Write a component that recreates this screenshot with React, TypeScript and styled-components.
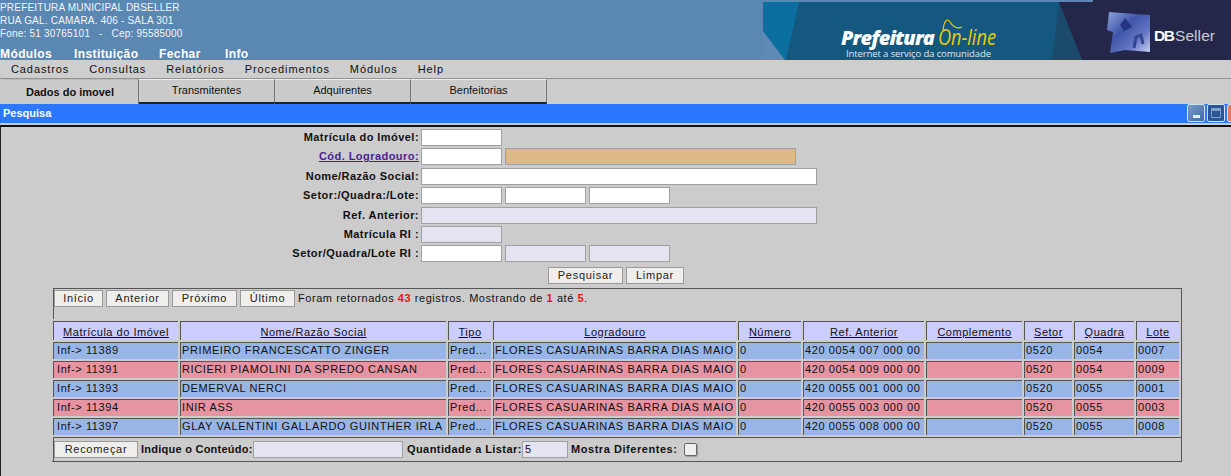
import React from "react";
import styled, { createGlobalStyle } from "styled-components";

const Global = createGlobalStyle`
  html, body { margin: 0; padding: 0; background: #cccccc; overflow: hidden; }
  body { font-family: "Liberation Sans", Arial, sans-serif; color: #000; }
  * { box-sizing: border-box; }
`;
const Page = styled.div`width: 1231px; height: 476px; overflow: hidden; background: #ccc; display: flex; flex-direction: column;`;
const Header = styled.header`height: 60px; display: flex; justify-content: space-between; background: #5b87b3; color: #fff;`;
const HeaderLeft = styled.div`display: flex; flex-direction: column; padding-top: 1px;`;
const Address = styled.div`font-size: 10px; line-height: 13px; height: 13px; letter-spacing: 0.2px; color: #f2f6fa; white-space: pre;`;
const TopMenu = styled.nav`display: flex; margin-top: 7px; font-size: 12px; font-weight: 700; line-height: 14px; letter-spacing: 0.4px;`;
const TopItem = styled.span<{ $w: number }>`width: ${p => p.$w}px;`;
const Banner = styled.svg`display: block; width: 468px; height: 60px; flex: none;`;
const MenuBar = styled.nav`height: 19px; display: flex; align-items: center; padding: 0 0 1px 11px; gap: 20px; background: #cecece; border-bottom: 1px solid #929292; font-size: 11px; letter-spacing: 0.9px; color: #111;`;
const Tabs = styled.div`height: 25px; display: flex; padding-left: 2px; background: #cccccc;`;
const Tab = styled.div<{ $active?: boolean; $w: number }>`
  width: ${p => p.$w}px; display: flex; align-items: center; justify-content: center;
  font-size: 11px; background: #cbcbcb; color: #111;
  border-top: 1px solid ${p => p.$active ? "#bbb" : "#eee"};
  border-right: 1px solid #777;
  border-bottom: ${p => p.$active ? "0" : "2px solid #222"};
  font-weight: ${p => p.$active ? 700 : 400};
  padding-bottom: ${p => p.$active ? "0" : "3px"};
`;
const TitleBar = styled.div`height: 19px; display: flex; align-items: center; justify-content: space-between; background: #2b78fe; color: #fff; font-size: 11px; font-weight: 700; padding: 0 0 2px 3px;`;
const WinButtons = styled.div`display: flex; gap: 2px; width: 44px; overflow: hidden; flex: none; height: 19px; margin-bottom: -2px;`;
const WinButton = styled.div<{ $bg: string }>`flex: none; width: 18px; height: 18px; background: ${p => p.$bg}; border: 1px solid #cfe0f5; border-radius: 2px; display: flex; align-items: flex-end; justify-content: center; padding-bottom: 3px;`;
const Dash = styled.span`display: block; width: 7px; height: 3px; background: #e8eef6;`;
const Square = styled.span`display: block; width: 10px; height: 10px; border: 1px solid #7f9fca; border-top-width: 3px;`;
const Body = styled.main`flex: 1; margin-top: 2px; border-top: 2px solid #111; border-left: 1px solid #222; min-height: 0;`;
const Form = styled.form`display: grid; grid-template-columns: 419px 1fr; grid-auto-rows: 19.4px; padding-top: 2px; margin-left: -1px;`;
const Label = styled.label`font-size: 11px; font-weight: 700; text-align: right; letter-spacing: 0.45px; line-height: 17px; color: #111; white-space: nowrap;`;
const LinkLabel = styled.a`color: #4b1f94; text-decoration: underline; cursor: pointer;`;
const Fields = styled.div`display: flex; gap: 3px; padding-left: 2px; align-items: flex-start;`;
const Input = styled.input<{ $w: number; $tone?: "white" | "lav" | "tan" }>`
  width: ${p => p.$w}px; height: 17px; padding: 0 2px; margin: 0; flex: none; font: 11px "Liberation Sans", sans-serif; color: #111;
  border: 1px solid #a0a0a0; border-radius: 0; outline: 0;
  background: ${p => p.$tone === "lav" ? "#e4e3f1" : p.$tone === "tan" ? "#deb887" : "#fff"};
`;
const Actions = styled.div`display: flex; gap: 3px; padding-left: 548px; margin-top: 2px; margin-left: -1px;`;
const Btn = styled.button<{ $w: number }>`
  width: ${p => p.$w}px; height: 17px; padding: 0; flex: none; font: 11px "Liberation Sans", sans-serif; letter-spacing: 0.72px; color: #222; line-height: 15px;
  background: #f0eeeb; border: 1px solid #9a9a9a; border-radius: 0;
`;
const Panel = styled.section`margin: 4px 0 0 51px; width: 1130px; border-right: 1px solid #555; border-bottom: 1px solid #555;`;
const Pager = styled.div`height: 31px; margin-left: 1px; border-top: 1px solid #555; border-left: 1px solid #555; display: flex; align-items: flex-start; gap: 3px; padding-top: 1px; font-size: 11px; letter-spacing: 0.55px; color: #111;`;
const Info = styled.span`line-height: 17px;`;
const Red = styled.b`color: #f01010;`;
const Table = styled.table`border-collapse: separate; border-spacing: 2px; table-layout: fixed; width: 1128px; margin: 0 0 0 -1px; font-size: 11px; letter-spacing: 0.6px; color: #111;`;
const Th = styled.th`height: 19px; padding: 3px 0 0; vertical-align: top; font-weight: 400; background: #ccccff; border-top: 1px solid #555; border-left: 1px solid #555; text-align: center; line-height: 14px; letter-spacing: 0.52px;`;
const ThText = styled.span`text-decoration: underline; text-underline-offset: 1px;`;
const Td = styled.td<{ $tone: string; $pad?: number }>`height: 17px; padding: 0 0 0 ${p => p.$pad || 1}px; background: ${p => p.$tone}; border-top: 1px solid #555; border-left: 1px solid #555; overflow: hidden; white-space: nowrap; line-height: 15px;`;
const Footer = styled.div`height: 24px; margin-left: 1px; border-top: 1px solid #555; border-left: 1px solid #555; display: flex; align-items: flex-start; padding-top: 3px; font-size: 11px; font-weight: 700; color: #111;`;
const FootLabel = styled.span<{ $ml: number; $w: number; $ls: number }>`margin-left: ${p => p.$ml}px; width: ${p => p.$w}px; letter-spacing: ${p => p.$ls}px; flex: none; line-height: 17px; white-space: nowrap;`;
const Check = styled.input`width: 13px; height: 13px; margin: 2px 0 0 5px; appearance: none; background: #f2f0ee; border: 1px solid #666; border-radius: 2px; box-shadow: 1px 1px 1px #999;`;

const cols = [125, 266, 43, 243, 63, 121, 96, 48, 60, 43];
const heads = ["Matrícula do Imóvel", "Nome/Razão Social", "Tipo", "Logradouro", "Número", "Ref. Anterior", "Complemento", "Setor", "Quadra", "Lote"];
const street = "FLORES CASUARINAS BARRA DIAS MAIO";
const rows = [
  ["Inf-> 11389", "PRIMEIRO FRANCESCATTO ZINGER", "420 0054 007 000 00", "0054", "0007"],
  ["Inf-> 11391", "RICIERI PIAMOLINI DA SPREDO CANSAN", "420 0054 009 000 00", "0054", "0009"],
  ["Inf-> 11393", "DEMERVAL NERCI", "420 0055 001 000 00", "0055", "0001"],
  ["Inf-> 11394", "INIR ASS", "420 0055 003 000 00", "0055", "0003"],
  ["Inf-> 11397", "GLAY VALENTINI GALLARDO GUINTHER IRLA", "420 0055 008 000 00", "0055", "0008"],
];

function BannerArt() {
  return (
    <Banner viewBox="0 0 468 60">
      <defs>
        <linearGradient id="cube" x1="0" y1="0" x2="1" y2="1">
          <stop offset="0" stopColor="#8ea4dc" />
          <stop offset="0.4" stopColor="#3f55a8" />
          <stop offset="0.7" stopColor="#6577c4" />
          <stop offset="1" stopColor="#cdd5f2" />
        </linearGradient>
      </defs>
      <rect x="0" y="2" width="468" height="58" fill="#14587f" />
      <rect x="330" y="0" width="138" height="2" fill="#25274a" />
      <polygon points="0,2 36,2 23,60 22,60 0,31" fill="#0a6e9e" />
      <polygon points="296,2 319,60 289,60" fill="#1b4a6c" />
      <polygon points="296,2 468,2 468,60 319,60" fill="#25274a" />
      <polygon points="0,31 22,60 0,60" fill="#5f8ab6" />
      <polygon points="346,12 387,15 387,52 362,50 347,53 350,32 344,30" fill="url(#cube)" />
      <polygon points="357,25 362,18 369,27 361,31" fill="#26357f" />
      <path d="M371 48 L373 37 L378 35 L380 44" fill="none" stroke="#34468f" strokeWidth="3" />
      <text x="78" y="45" fontFamily="'Open Sans', sans-serif" fontStyle="italic" fontWeight="800" fontSize="20" fill="#fff" textLength="94">Prefeitura</text>
      <text x="175" y="45" fontFamily="'Open Sans', sans-serif" fontStyle="italic" fontSize="21" fill="#e9cc0c" textLength="58" lengthAdjust="spacingAndGlyphs">On-line</text>
      <path d="M180 30 C181 22 184 17 187 22 C190 27 194 29 199 27" fill="none" stroke="#e9cc0c" strokeWidth="1.2" />
      <text x="83" y="57" fontFamily="'Open Sans', sans-serif" fontSize="9.5" fill="#dfe7ee" textLength="145">Internet a serviço da comunidade</text>
      <text x="391" y="41" fontFamily="'Liberation Sans', sans-serif" fontWeight="700" fontSize="15.5" fill="#fff" textLength="21">DB</text>
      <text x="412" y="41" fontFamily="'Liberation Sans', sans-serif" fontSize="15.5" fill="#c8ccd8" textLength="40">Seller</text>
    </Banner>
  );
}

export default function App() {
  return (
    <Page>
      <Global />
      <Header>
        <HeaderLeft>
          <Address>PREFEITURA MUNICIPAL DBSELLER</Address>
          <Address>RUA GAL. CAMARA. 406 - SALA 301</Address>
          <Address>{"Fone: 51 30765101   -   Cep: 95585000"}</Address>
          <TopMenu>
            <TopItem $w={74}>Módulos</TopItem>
            <TopItem $w={85}>Instituição</TopItem>
            <TopItem $w={66}>Fechar</TopItem>
            <TopItem $w={40}>Info</TopItem>
          </TopMenu>
        </HeaderLeft>
        <BannerArt />
      </Header>
      <MenuBar>
        {["Cadastros", "Consultas", "Relatórios", "Procedimentos", "Módulos", "Help"].map(m => <span key={m}>{m}</span>)}
      </MenuBar>
      <Tabs>
        <Tab $active $w={137}>Dados do imovel</Tab>
        <Tab $w={136}>Transmitentes</Tab>
        <Tab $w={136}>Adquirentes</Tab>
        <Tab $w={136}>Benfeitorias</Tab>
      </Tabs>
      <TitleBar>
        Pesquisa
        <WinButtons>
          <WinButton $bg="linear-gradient(135deg,#7a9cc8,#3f68a6)"><Dash /></WinButton>
          <WinButton $bg="#2c5596"><Square /></WinButton>
          <WinButton $bg="#e9795c" />
        </WinButtons>
      </TitleBar>
      <Body>
        <Form>
          <Label>Matrícula do Imóvel:</Label>
          <Fields><Input $w={81} /></Fields>
          <Label><LinkLabel>Cód. Logradouro:</LinkLabel></Label>
          <Fields><Input $w={81} /><Input $w={291} $tone="tan" /></Fields>
          <Label>Nome/Razão Social:</Label>
          <Fields><Input $w={396} /></Fields>
          <Label>Setor:/Quadra:/Lote:</Label>
          <Fields><Input $w={81} /><Input $w={81} /><Input $w={81} /></Fields>
          <Label>Ref. Anterior:</Label>
          <Fields><Input $w={396} $tone="lav" /></Fields>
          <Label>Matrícula RI :</Label>
          <Fields><Input $w={81} $tone="lav" /></Fields>
          <Label>Setor/Quadra/Lote RI :</Label>
          <Fields><Input $w={81} /><Input $w={81} $tone="lav" /><Input $w={81} $tone="lav" /></Fields>
        </Form>
        <Actions>
          <Btn type="button" $w={75}>Pesquisar</Btn>
          <Btn type="button" $w={58}>Limpar</Btn>
        </Actions>
        <Panel>
          <Pager>
            <Btn type="button" $w={49}>Início</Btn>
            <Btn type="button" $w={63}>Anterior</Btn>
            <Btn type="button" $w={65}>Próximo</Btn>
            <Btn type="button" $w={55}>Último</Btn>
            <Info>Foram retornados <Red>43</Red> registros. Mostrando de <Red>1</Red> até <Red>5</Red>.</Info>
          </Pager>
          <Table>
            <colgroup>{cols.map((w, i) => <col key={i} style={{ width: w }} />)}</colgroup>
            <thead>
              <tr>{heads.map(h => <Th key={h}><ThText>{h}</ThText></Th>)}</tr>
            </thead>
            <tbody>
              {rows.map((r, i) => {
                const tone = i % 2 ? "#e693a2" : "#97b5e6";
                return (
                  <tr key={r[0]}>
                    <Td $tone={tone} $pad={3}>{r[0]}</Td>
                    <Td $tone={tone}>{r[1]}</Td>
                    <Td $tone={tone}>Pred...</Td>
                    <Td $tone={tone}>{street}</Td>
                    <Td $tone={tone}>0</Td>
                    <Td $tone={tone}>{r[2]}</Td>
                    <Td $tone={tone}></Td>
                    <Td $tone={tone}>0520</Td>
                    <Td $tone={tone}>{r[3]}</Td>
                    <Td $tone={tone}>{r[4]}</Td>
                  </tr>
                );
              })}
            </tbody>
          </Table>
          <Footer>
            <Btn type="button" $w={84}>Recomeçar</Btn>
            <FootLabel $ml={3} $w={112} $ls={0.25}>Indique o Conteúdo:</FootLabel>
            <Input $w={150} $tone="lav" />
            <FootLabel $ml={4} $w={115} $ls={0.42}>Quantidade a Listar:</FootLabel>
            <Input $w={46} $tone="lav" defaultValue="5" />
            <FootLabel $ml={3} $w={108} $ls={0.55}>Mostra Diferentes:</FootLabel>
            <Check type="checkbox" />
          </Footer>
        </Panel>
      </Body>
    </Page>
  );
}
